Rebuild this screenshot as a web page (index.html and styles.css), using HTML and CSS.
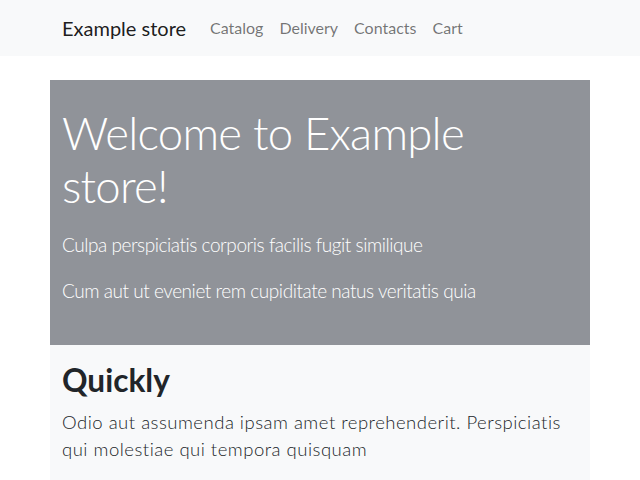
FILE: index.html
```html
<!DOCTYPE html>
<html lang="en">
<head>
<meta charset="utf-8">
<title>Example store</title>
<link rel="stylesheet" href="styles.css">
</head>
<body>
<nav class="navbar">
  <div class="container nav-inner">
    <a class="brand" href="#">Example store</a>
    <ul class="nav-links">
      <li><a href="#">Catalog</a></li>
      <li><a href="#">Delivery</a></li>
      <li><a href="#">Contacts</a></li>
      <li><a href="#">Cart</a></li>
    </ul>
  </div>
</nav>
<main class="container main">
  <section class="hero">
    <h1 class="hero-title">Welcome to Example store!</h1>
    <p class="lead">Culpa perspiciatis corporis facilis fugit similique</p>
    <p class="lead">Cum aut ut eveniet rem cupiditate natus veritatis quia</p>
  </section>
  <section class="feature">
    <h2 class="feature-title">Quickly</h2>
    <p class="feature-text">Odio aut assumenda ipsam amet reprehenderit. Perspiciatis qui molestiae qui tempora quisquam</p>
  </section>
</main>
</body>
</html>
```
FILE: styles.css
```css
* { box-sizing: border-box; }
html, body { margin: 0; padding: 0; }
body {
  font-family: "Lato", "Open Sans", sans-serif;
  font-size: 16px;
  line-height: 1.5;
  color: #212529;
  background: #fff;
}
.container {
  width: 540px;
  margin: 0 auto;
}
.navbar {
  background: #f8f9fa;
  padding: 8px 0;
}
.nav-inner {
  display: flex;
  align-items: center;
  padding: 0 12px;
}
.brand {
  font-size: 20px;
  color: rgba(0,0,0,.9);
  text-decoration: none;
  padding: 5px 0;
  margin-right: 16px;
  line-height: 30px;
}
.nav-links {
  display: flex;
  list-style: none;
  margin: 0;
  padding: 0;
}
.nav-links a {
  display: block;
  padding: 8px 8px;
  color: rgba(0,0,0,.55);
  text-decoration: none;
  font-size: 16px;
  line-height: 24px;
}
.main {
  margin-top: 24px;
}
.hero {
  background: #909399;
  color: #fff;
  padding: 26px 12px 23px;
}
.hero-title {
  font-size: 45.5px;
  font-weight: 300;
  line-height: 53px;
  letter-spacing: -0.75px;
  margin: 0 0 18px;
}
.lead {
  font-size: 19px;
  font-weight: 300;
  line-height: 30px;
  letter-spacing: -0.45px;
  margin: 0 0 16px;
}
.feature {
  background: #f8f9fa;
  padding: 16px 12px 20px;
}
.feature-title {
  font-size: 31.6px;
  font-weight: 700;
  line-height: 38px;
  margin: 0 0 10px;
}
.feature-text {
  font-size: 18.5px;
  font-weight: 300;
  line-height: 27px;
  letter-spacing: 0.5px;
  margin: 0;
  color: #212529;
}
```
